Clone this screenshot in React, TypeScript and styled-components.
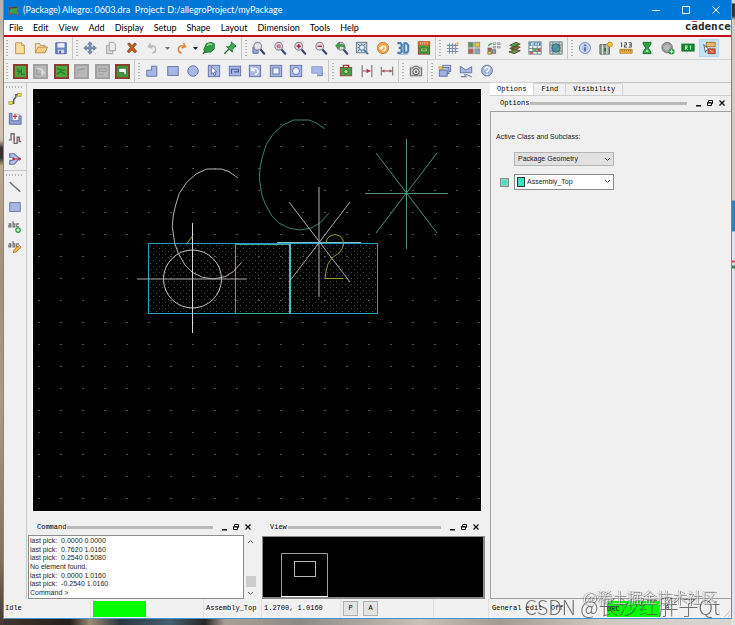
import React from "react";
import styled, { createGlobalStyle } from "styled-components";

const mono = '"Liberation Mono", "DejaVu Sans Mono", monospace';
const sans = '"Liberation Sans", Arial, sans-serif';
const ui = 'Lato, "Open Sans", sans-serif';

const GlobalStyle = createGlobalStyle`
  *, *::before, *::after { box-sizing: border-box; }
  html, body { margin: 0; padding: 0; }
  body { font-family: ${sans}; font-size: 8px; color: #222; }
  button, select { font: inherit; color: inherit; }
`;

/* ---------- shell ---------- */

const Desktop = styled.div`
  min-height: 100vh;
  display: flex;
  padding: 0 3px 6px 3px;
  background:
    linear-gradient(to bottom, #d6d2cf 0 3px, #333 4px 16px, #cfcac6 20px 200px, #2f7fc0 201px 231px, #dfe3ea 232px 260px, #d8404c 261px 262px, #dfe3ea 263px 265px, #3f7d4d 266px 268px, #dfe3ea 269px) right top / 4px 100% no-repeat,
    linear-gradient(to bottom, #b9b4b0 0 20px, #d5d0c8 60px, #c9c0b4 140px, #333 148px 158px, #b9aa98 166px, #9b8f80 280px, #a59c8c 400px, #7d7465 560px, #42372e) left top / 4px 100% no-repeat,
    linear-gradient(to right, #43342b 0, #24201d 70px, #9a8a72 90px, #2b3640 120px, #45606f 170px, #262523 205px, #a9a096 225px, #8d8a86 300px, #c9c1b8 420px, #a49b93 500px, #cfc8c0 600px, #d9d6d2) left bottom / 100% 6px no-repeat,
    #b8b0a6;
`;

const Window = styled.div`
  flex: 1;
  min-width: 0;
  display: grid;
  grid-template-rows: auto auto auto 1fr auto;
  background: #f0f0f0;
  border: 1px solid #4596cf;
  border-top: 0;
`;

const TitleBar = styled.header`
  height: 20px;
  display: flex;
  align-items: center;
  padding-left: 3px;
  background: #0078d7;
  color: #fff;
  font: 9px/20px ${ui};
  white-space: pre;
`;
const Title = styled.h1`
  flex: 1;
  margin: 0 0 0 3px;
  font: inherit;
`;
const CaptionButton = styled.button`
  width: 30px;
  height: 20px;
  padding: 0;
  border: 0;
  background: none;
  color: #fff;
  display: grid;
  place-items: center;
`;

const MenuBar = styled.nav`
  height: 17px;
  display: flex;
  align-items: flex-start;
  padding-left: 5px;
  background: #fff;
  border-bottom: 2px solid #c40d1e;
`;
const MenuItem = styled.button`
  height: 15px;
  padding: 0;
  margin-right: 10px;
  border: 0;
  background: none;
  color: #000;
  font: 9px/15px ${ui};
`;
const Brand = styled.div`
  margin-left: auto;
  padding-top: 1px;
  color: #2b2b2b;
  font: bold 11px/12px "DejaVu Sans Mono", monospace;
`;
const BrandAccent = styled.span`
  position: relative;
  &::before {
    content: "";
    position: absolute;
    left: 1px;
    top: 1px;
    width: 5px;
    height: 1px;
    background: #c8384a;
  }
`;

/* ---------- toolbars ---------- */

const ToolRows = styled.div`
  border-bottom: 1px solid #c4c4c4;
`;
const ToolRow = styled.div`
  height: 23px;
  display: flex;
  gap: 1px;
  border-bottom: 1px solid #d2d2d2;
  &:last-child { height: 22px; border-bottom: 0; }
`;
const Group = styled.div<{ $last?: boolean }>`
  display: flex;
  align-items: center;
  padding: 0 1px 0 2px;
  border-right: 1px solid ${(p) => (p.$last ? "transparent" : "#c8c8c8")};
`;
const Grip = styled.span<{ $across?: boolean }>`
  flex: none;
  width: ${(p) => (p.$across ? "18px" : "2px")};
  height: ${(p) => (p.$across ? "2px" : "16px")};
  background: repeating-linear-gradient(${(p) => (p.$across ? "to right" : "to bottom")}, #b4b4b4 0 1px, #f0f0f0 1px 3px);
`;
const Tools = styled.div<{ $width: number }>`
  width: ${(p) => p.$width}px;
  margin-left: 2px;
  display: flex;
  align-items: center;
  justify-content: space-between;
`;
const ToolButton = styled.button<{ $active?: boolean; $narrow?: boolean }>`
  width: ${(p) => (p.$narrow ? "6px" : "20px")};
  height: 18px;
  padding: 0;
  border: 1px solid ${(p) => (p.$active ? "#b4d8f4" : "transparent")};
  background: ${(p) => (p.$active ? "#c6e2f7" : "none")};
  display: grid;
  place-items: center;
  svg { display: block; }
`;

/* ---------- work area ---------- */

const Work = styled.main`
  display: grid;
  grid-template-columns: 23px minmax(0, 1fr) 241px;
  min-height: 0;
`;
const SideBar = styled.div`
  display: flex;
  flex-direction: column;
  align-items: center;
  border-right: 1px solid #cacaca;
`;
const SideGroup = styled.div`
  width: 100%;
  display: flex;
  flex-direction: column;
  align-items: center;
  gap: 2px;
  padding: 3px 1px 2px 0;
  & + & { border-top: 1px solid #c4c4c4; }
`;
const Center = styled.div`
  display: grid;
  grid-template-rows: minmax(0, 1fr) auto;
  min-width: 0;
`;
const CanvasFrame = styled.div`
  margin: 5px 8px 8px 5px;
  min-height: 200px;
  background: #000;
  border: 1px solid #fafafa;
  svg { display: block; width: 100%; height: 100%; }
`;
const Docks = styled.div`
  display: flex;
  gap: 5px;
  padding: 0 5px 0 1px;
`;
const Dock = styled.section<{ $share: number }>`
  flex: ${(p) => p.$share} 1 0;
  min-width: 0;
`;
const DockHeader = styled.div<{ $indent: number }>`
  height: 15px;
  display: flex;
  align-items: center;
  padding: 0 3px 1px ${(p) => p.$indent}px;
`;
const DockTitle = styled.h2`
  margin: 0;
  font: 7px/12px ${mono};
  color: #000;
`;
const DockLine = styled.span`
  flex: 1;
  height: 3px;
  margin: 0 5px 0 1px;
  background: #b9b9b9;
`;
const DockButton = styled.button`
  width: 12px;
  height: 12px;
  padding: 0;
  border: 0;
  background: none;
  display: grid;
  place-items: center;
`;

const CommandBody = styled.div`
  display: grid;
  grid-template-columns: minmax(0, 1fr) 13px;
  height: 64px;
`;
const Log = styled.div`
  display: flex;
  flex-direction: column;
  justify-content: space-between;
  padding: 1px;
  background: #fff;
  border: 1px solid #8c8c8c;
  white-space: pre;
  line-height: 8px;
  font-size: 7px;
  color: #222;
`;
const Scroll = styled.div`
  display: grid;
  grid-template-rows: 12px 1fr 11px 12px;
  justify-items: center;
`;
const ScrollButton = styled.button<{ $row: number }>`
  grid-row: ${(p) => p.$row};
  width: 12px;
  padding: 0;
  border: 0;
  background: none;
  display: grid;
  place-items: center;
`;
const Thumb = styled.span`
  grid-row: 3;
  width: 10px;
  background: #cdcdcd;
`;
const ViewBody = styled.div`
  height: 63px;
  margin-top: 1px;
  background: #000;
  border: 1px solid #8a8a8a;
  border-width: 1px 2px 2px 1px;
  svg { display: block; width: 100%; height: 100%; }
`;

/* ---------- options ---------- */

const Side = styled.aside`
  display: flex;
  flex-direction: column;
`;
const Tabs = styled.div`
  display: flex;
  align-items: flex-end;
  height: 13px;
  border-bottom: 1px solid #d0d0d0;
`;
const Tab = styled.button<{ $on?: boolean }>`
  height: ${(p) => (p.$on ? 13 : 12)}px;
  padding: 0 7px;
  border: 1px solid #d4d4d4;
  border-width: 1px 1px 0 0;
  background: ${(p) => (p.$on ? "#fff" : "#f0f0f0")};
  color: #000;
  font: 7px/11px ${mono};
`;
const OptionsBody = styled.div`
  flex: 1;
  padding: 20px 5px;
  border: 1px solid #a0a0a0;
  border-right-width: 0;
  display: flex;
  flex-direction: column;
`;
const FieldLabel = styled.label`
  line-height: 10px;
  font-size: 7px;
  color: #222;
`;
const FieldRow = styled.div`
  display: flex;
  align-items: center;
  gap: 5px;
  margin-top: 8px;
  &:nth-of-type(1) { margin-top: 10px; padding-left: 18px; }
  &:nth-of-type(2) { padding-left: 4px; }
`;
const Combo = styled.div`
  position: relative;
  width: 100px;
  svg { position: absolute; right: 3px; top: 5px; pointer-events: none; }
`;
const Select = styled.select<{ $filled?: boolean }>`
  display: block;
  width: 100%;
  height: ${(p) => (p.$filled ? 14 : 16)}px;
  padding: 0 12px 0 ${(p) => (p.$filled ? 3 : 12)}px;
  appearance: none;
  border: 1px solid ${(p) => (p.$filled ? "#b4b4b4" : "#8a8a8a")};
  border-radius: 0;
  background: ${(p) => (p.$filled ? "#e1e1e1" : "#fff")};
  font-size: 7px;
  line-height: 12px;
`;
const Swatch = styled.span`
  position: absolute;
  left: 3px;
  top: 3px;
  width: 8px;
  height: 10px;
  background: #35e8c0;
  border: 1px solid #333;
`;
const VisibleBox = styled.input`
  appearance: none;
  width: 9px;
  height: 9px;
  margin: 0;
  background: #3fe6c4;
  border: 1px solid #8c8c8c;
  outline: 1px solid #a9c9c0;
  outline-offset: -2px;
`;

/* ---------- status ---------- */

const StatusBar = styled.footer`
  height: 19px;
  display: grid;
  grid-template-columns: 86px 113px 58px 79px 93px 55px minmax(0, 1fr);
  font: 7px/19px ${mono};
  color: #000;
  background: #f1f1f1;
`;
const Cell = styled.div<{ $pad?: number }>`
  display: flex;
  align-items: center;
  gap: 5px;
  padding-left: ${(p) => p.$pad ?? 2}px;
  white-space: pre;
  & + & { border-left: 1px solid #e0e0e0; }
`;
const Lamp = styled.span`
  width: 53px;
  height: 16px;
  background: #00ff00;
  line-height: 16px;
`;
const MiniButton = styled.button`
  width: 15px;
  height: 15px;
  padding: 0;
  border: 1px solid #b0b0b0;
  background: #e3e3e3;
  line-height: 13px;
`;
const EditState = styled.span`
  width: 110px;
`;
const SizeGrip = styled.span`
  align-self: end;
  margin: 0 1px 1px auto;
  width: 7px;
  height: 7px;
  background: repeating-linear-gradient(135deg, #f1f1f1 0 2px, #c2c2c2 2px 3px);
  clip-path: polygon(100% 0, 100% 100%, 0 100%);
`;

const Marks = styled.div`
  position: fixed;
  right: 15px;
  bottom: 7px;
  pointer-events: none;
  white-space: nowrap;
  font-family: "Noto Sans CJK SC", sans-serif;
`;
const FrontMark = styled.div`
  font-size: 20px;
  line-height: 22px;
  font-weight: 300;
  color: rgba(80, 80, 80, 0.8);
`;
const BackMark = styled.div`
  position: absolute;
  right: 3px;
  bottom: 11px;
  font-size: 15px;
  line-height: 20px;
  font-weight: 300;
  color: rgba(235, 235, 235, 0.8);
  text-shadow: 1px 1px 0 rgba(100, 100, 100, 0.8), -1px 0 0 rgba(130, 130, 130, 0.5);
`;

/* ---------- icons ---------- */

const Pcb = ({ border = "#8e3b2c", fill = "#4fa83f", children }: any) => (
  <>
    <rect x="1" y="1" width="14" height="14" fill={fill} stroke={border} strokeWidth="2" />
    {children}
  </>
);
const Lens = ({ children }: any) => (
  <>
    <path d="M9.500 9.500l4.500 5" stroke="#39496f" strokeWidth="2.400" strokeLinecap="round" />
    <circle cx="6.500" cy="6" r="4.400" fill="#e5e0e8" stroke="#8b8796" strokeWidth="1.300" />
    {children}
  </>
);
const blue = { fill: "#a9b8e2", stroke: "#5d6ca5" };

const glyphs: Record<string, React.ReactNode> = {
  new: <><path d="M3 2h7l3 3v9.500H3z" fill="#f7dca2" stroke="#bd8c46" /><path d="M10 2v3h3" fill="#fff3d8" stroke="#bd8c46" /></>,
  open: <><path d="M1.500 13V3h5l1 2h5v2" fill="#f6e3b8" stroke="#b98f55" /><path d="M1.500 13.500L4.500 7h11l-3 6.500z" fill="#fbcf86" stroke="#b98145" /></>,
  save: <><path d="M2 2h12v12.500H2z" fill="#7187c3" stroke="#4b5f9b" /><path d="M4 2.500h8v5H4z" fill="#e9f0fb" /><path d="M4.500 10h7v4h-7z" fill="#cfd6e8" /><path d="M6 11h2v3H6z" fill="#44548a" /></>,
  move: <path d="M8 .8l2.600 3H9v3.200h3.200V5.400l3 2.600-3 2.600V9H9v3.200h1.600L8 15.200l-2.600-3H7V9H3.800v1.600L.8 8l3-2.600V7H7V3.800H5.400z" fill="#7d93b8" stroke="#4f6488" strokeWidth=".7" />,
  copy: <><path d="M3 5h7v9.500H3z" fill="#dcdcdc" stroke="#9c9c9c" /><path d="M6 1.500h5l2 2V11H6z" fill="#ececec" stroke="#9c9c9c" /></>,
  del: <path d="M3 3.200l2.200-1L8 5.500l3-3.300 2 1.300-3.200 4 3.500 4.200-2.200 2L8 10l-3.200 3.500-2.200-1.500 3.500-4.500z" fill="#c4601f" stroke="#6e2e10" strokeWidth=".8" />,
  undo: <path d="M5 2.500L3 6.500l4.500 1.500M3.500 6.300c4-2 7.500-.5 7.500 3 0 2.500-1.500 4-3.500 4.500" fill="none" stroke="#b9b9b9" strokeWidth="1.800" />,
  redo: <path d="M11 2.500l2 4-4.500 1.500M12.500 6.300c-4-2-7.500-.5-7.500 3 0 2.500 1.500 4 3.500 4.500" fill="none" stroke="#e28a3c" strokeWidth="1.900" />,
  shapeGreen: <><path d="M2 10l3-7 5-1.500L14 3v6l-4 3.500-6 .5z" fill="#2f9e44" stroke="#176b2c" /><path d="M5.500 5.500L8 3.500l3.500.5" stroke="#8fdc98" strokeWidth="1.500" fill="none" /><path d="M1 14.500L4 12" stroke="#176b2c" strokeWidth="1.500" /></>,
  pin: <><path d="M9.500 1l5.500 5-2 .8-2.500 2.800.2 3L4 6.500l3 .2L9.500 3.500z" fill="#3fae52" stroke="#176b2c" /><path d="M6.500 9.500L1.500 14.500" stroke="#256b35" strokeWidth="1.500" /></>,
  zoomArea: <><path d="M1 7h6v7H1z" fill="#90a5d8" stroke="#5d6ca5" /><Lens /></>,
  zoomFit: <Lens><path d="M4.800 4.500h3.400v3.200H4.800z" fill="#d6a0ac" stroke="#b54a5c" strokeWidth=".8" /></Lens>,
  zoomIn: <Lens><path d="M6.500 3.500v5M4 6h5" stroke="#b8243a" strokeWidth="1.600" /></Lens>,
  zoomOut: <Lens><path d="M4 6h5" stroke="#b8243a" strokeWidth="1.600" /></Lens>,
  zoomPrev: <><Lens /><path d="M12 9c0-4-3-6-7-5V1.500L.5 5.500 5 9V6.500c3-.8 5-.3 7 2.500z" fill="#46a24f" stroke="#28713a" strokeWidth=".6" /></>,
  zoomWorld: <><rect x="1.500" y="1.500" width="12" height="12" fill="#c3d3dd" stroke="#5f7180" /><path d="M3 3l3 3M12 3L9 6M3 12l3-3M7.500 3v9M3 7.500h9" stroke="#516880" /><circle cx="8" cy="7.500" r="3" fill="#e1edf4" stroke="#63839f" /><path d="M10 10l5 5" stroke="#5178a5" strokeWidth="2" /></>,
  refresh: <><circle cx="8" cy="8" r="6.500" fill="#f1a84c" stroke="#c27a2b" /><path d="M4 7l2 2.500L8 7M6 9c0-4 5-4 5-.8 0 2-1.500 3-3.500 3" fill="none" stroke="#fff" strokeWidth="1.500" /></>,
  three: <><path d="M1.500 2.500H5L6.500 4v2.500L5 8l1.500 1.500V12L5 13.500H1.500M3 8h2" fill="none" stroke="#4d82b5" strokeWidth="2.600" /><path d="M9.500 2.500H12l2 2.500v6l-2 2.500H9.500z" fill="#dbe8f3" stroke="#4d82b5" strokeWidth="2.400" /><path d="M3 15.300h10l2.500-3" stroke="#8fb3d4" fill="none" /></>,
  flip: <><rect x="1.500" y="1" width="13" height="14" fill="#4f9a3f" stroke="#77452a" /><path d="M1 .5h14V5H1z" fill="#d8653a" /><path d="M4 1.500v2.500M6.500 1.500v2.500M9 1.500v2.500M11.500 1.500v2.500" stroke="#f6d9a0" /><path d="M4 8h8v4.500H4z" fill="#9ed36d" stroke="#2e6b28" /><path d="M6 10h4" stroke="#2e6b28" /></>,
  grid: <><path d="M1 5h13M1 8.500h13M1 12h13M4 2.500v12M7.500 2.500v12M11 2.500v12" stroke="#7e8eb0" strokeWidth="1.200" /><path d="M13 0l.7 2 2 .7-2 .8-.7 2-.7-2-2-.8 2-.7z" fill="#f2bd6d" /></>,
  colors: <><rect x="1.500" y="1.500" width="5.500" height="5.500" fill="#4f9e46" stroke="#8a8a8a" /><rect x="9" y="1.500" width="5.500" height="5.500" fill="#e8c23a" stroke="#8a8a8a" /><rect x="1.500" y="9" width="5.500" height="5.500" fill="#c9574b" stroke="#8a8a8a" /><rect x="9" y="9" width="5.500" height="5.500" fill="#8fa2c6" stroke="#8a8a8a" /></>,
  layers: <><path d="M7 2h3v2H7zM12 2h3v2h-3zM7 6h3v2H7zM12 6h3v2h-3z" fill="#d9d9d9" stroke="#7b7b7b" strokeWidth=".7" /><rect x="1" y="8" width="4" height="3" fill="#c9574b" stroke="#555" strokeWidth=".7" /><rect x="6" y="10" width="4" height="4" fill="#8fa2c6" stroke="#555" strokeWidth=".7" /><rect x="1" y="12" width="4" height="3" fill="#e8c23a" stroke="#555" strokeWidth=".7" /><path d="M2 6c0-3 2-3 4-3" stroke="#46a24f" strokeWidth="1.500" fill="none" /></>,
  stack: <><path d="M1 12.500l7-3 6 1.500-7 3.500z" fill="#6a9b48" stroke="#5b4430" /><path d="M2 8.500l6-3 6 1.500-6 3.500z" fill="#b05a43" stroke="#5b4430" /><path d="M2 5l7-3.500 5 2-6 3.500z" fill="#55a546" stroke="#5b4430" /><path d="M4 10l7-6" stroke="#2f6f2b" strokeWidth="1.500" /></>,
  cm: <><rect x="1" y="1" width="14" height="14" fill="#eef0ee" stroke="#6a7d80" /><path d="M1.500 1.500h13v4h-13z" fill="#4e87b0" /><path d="M7 2.500H4v2h3M9 5V2.500l1.500 1.500L12 2.500V5" stroke="#fff" fill="none" /><path d="M1 8.500h14M1 12h14M5.500 6v9M10.500 6v9" stroke="#6a7d80" /><path d="M6 9h4v2.500H6z" fill="#4fa84f" /><path d="M11 9h3.500v2.500H11zM2 12.500h3v2H2z" fill="#c9473f" /></>,
  globe: <><rect x="1" y="1" width="14" height="14" fill="#d3d9d7" stroke="#667773" /><path d="M1 4.500h14M1 11.500h14M4.500 1v14M11.500 1v14" stroke="#667773" /><circle cx="8" cy="8" r="4.800" fill="#4b86b6" stroke="#2c5679" /><path d="M5 5.500l3-1.500 1 2-2 2.500zM8.500 9l3-1-1 3-2 .5z" fill="#59ad55" /></>,
  info: <><circle cx="8" cy="8" r="6.300" fill="#b6c4e6" stroke="#7485b5" /><circle cx="8" cy="8" r="4.800" fill="none" stroke="#dfe7f7" /><path d="M8 7v5M8 4v1.700" stroke="#4a6196" strokeWidth="1.800" /></>,
  pads: <><path d="M1 4h11v11H1z" fill="#8d9a90" stroke="#5c655f" /><path d="M4 4v11M9 4v11" stroke="#dde2de" strokeWidth="1.300" /><path d="M6 8h2v4H6z" fill="#2f6b3b" /><circle cx="12.500" cy="4" r="2.800" fill="#f6c83b" stroke="#bb8d1d" /></>,
  ruler: <><path d="M1 9.500h14V14H1z" fill="#f3b64a" stroke="#b97e24" /><path d="M3.500 10v2M6 10v2M8.500 10v2M11 10v2M13 10v2" stroke="#8c5a16" /><path d="M2 2.500L3 2v5M6 2h2.500v2.500H6.200V7H9M11 2h3v5h-3M11.500 4.500H14" stroke="#3c3c3c" fill="none" /></>,
  timer: <><path d="M3.500 1.500h9v2L9.500 8l3 4.500v2h-9v-2L6.500 8l-3-4.500z" fill="#2f9e44" stroke="#1c6d2f" /><path d="M6 12.500L8 9.500l2 3z" fill="#b6ebbd" /></>,
  via: <><circle cx="7" cy="7.500" r="6" fill="#9a9a9a" stroke="#777" /><circle cx="7" cy="7.500" r="3.500" fill="#b9b9b9" /><circle cx="12" cy="12" r="3.500" fill="#2fa348" /><path d="M12 10v4M10 12h4" stroke="#fff" strokeWidth="1.300" /></>,
  r1: <><rect x="1" y="3.500" width="14" height="8" fill="#0f8a2b" stroke="#0c6b22" /><path d="M5 10V5.500h2v2H5.500L7.500 10M10 6l1-.5V10" stroke="#e6ffe9" fill="none" /></>,
  drag: <><rect x="5" y="1.500" width="10" height="5" fill="#f0b66a" stroke="#a5702d" /><path d="M2 4l6 6-3 .3L4 13z" fill="#fff" stroke="#333" strokeWidth=".8" /><rect x="7" y="9" width="8" height="5.500" fill="#df5b3a" stroke="#a53c22" /><path d="M9 10.500l4 2.500" stroke="#fbd4c7" /></>,

  pcb1: <Pcb><path d="M4 5l4 3H4M9 5v6h4M5 11l3-3" stroke="#2a7a30" fill="none" strokeWidth="1.200" /></Pcb>,
  pcb2: <Pcb border="#a0a0a0" fill="#b9b9b9"><path d="M5 5h3M8 5l4 4H9.500l1 3" fill="none" stroke="#dedede" strokeWidth="1.500" /><path d="M4 6v5h4" stroke="#939393" /></Pcb>,
  pcb3: <Pcb><path d="M3 5c4 0 4 3 9 1M3 11l4-3 5 3" stroke="#2a7a30" fill="none" strokeWidth="1.500" /></Pcb>,
  pcb4: <Pcb border="#a0a0a0" fill="#b9b9b9"><path d="M4 11V6h6M7 5h5" stroke="#9a9a9a" fill="none" /></Pcb>,
  pcb5: <Pcb border="#a0a0a0" fill="#b9b9b9"><path d="M4 5h8v3H4zM4 11h5" stroke="#9a9a9a" fill="none" /></Pcb>,
  pcb6: <Pcb fill="#3f9a35"><path d="M4 4.500h8v7H9.500V9H4z" fill="#f3f6f3" stroke="#1e6a26" strokeWidth=".8" /></Pcb>,
  poly: <path d="M2 14V7h5.500V2.500h6V14z" {...blue} />,
  rect: <rect x="2" y="3" width="12" height="10" {...blue} />,
  circle: <circle cx="8" cy="8" r="6" {...blue} />,
  select: <><rect x="1.500" y="1.500" width="13" height="13" {...blue} /><path d="M5 3l6 6H8.500l1.500 3.500-1.500.6L7 9.700 5 11.500z" fill="#fff" stroke="#435187" strokeWidth=".8" /></>,
  shapeEdit: <><rect x="1.500" y="2.500" width="13" height="11" {...blue} /><path d="M4 11V6h8v3H7" stroke="#4b5a93" fill="none" strokeWidth="1.300" /></>,
  rotate: <><rect x="1.500" y="1.500" width="13" height="13" {...blue} /><path d="M5 6.500a3.500 3.500 0 1 1 3 5.500M4 3.500v4h4" stroke="#fff" fill="none" strokeWidth="1.600" /></>,
  voidRect: <><rect x="1.500" y="1.500" width="13" height="13" {...blue} /><rect x="4.500" y="4.500" width="7" height="7" fill="#eef0f7" stroke="#5d6ca5" /></>,
  voidCircle: <><rect x="1.500" y="1.500" width="13" height="13" {...blue} /><circle cx="8" cy="8" r="4" fill="#eef0f7" stroke="#5d6ca5" /></>,
  poly2: <><path d="M2 3h12v10H9v-2.500H2z" {...blue} stroke="#8b98c4" /><path d="M8 13.500h6V8" stroke="#5d6ca5" fill="none" strokeDasharray="1 1" /></>,
  chip: <><path d="M5 4V1.500h6V4" stroke="#a3392b" fill="none" strokeWidth="1.500" /><rect x="1.500" y="4" width="13" height="9.500" fill="#3fa047" stroke="#963f2c" /><circle cx="8" cy="8.500" r="2.500" fill="#b7e58d" stroke="#276c2d" /></>,
  dim1: <><path d="M2.500 1v14M13.500 1v14" stroke="#787878" strokeWidth="1.300" /><path d="M3 8h9" stroke="#a5505c" strokeWidth="1.200" /><path d="M7.500 5.500L12 8l-4.500 2.500z" fill="#c22c3f" /></>,
  dim2: <><path d="M1.500 3v10M14.500 3v10" stroke="#787878" strokeWidth="1.300" /><path d="M2 8h12" stroke="#a5505c" strokeWidth="1.300" /><path d="M5 6L2.500 8 5 10zM11 6l2.500 2L11 10z" fill="#a5505c" /></>,
  camera: <><path d="M1.500 4.500h3l1.500-2h4l1.500 2h3v9h-13z" fill="#c8c8c8" stroke="#555" /><circle cx="8" cy="8.800" r="3.500" fill="#f2f2f2" stroke="#444" /><circle cx="8" cy="8.800" r="1.500" fill="#666" /></>,
  windows: <><rect x="5.500" y="1.500" width="9" height="7" fill="#c5d2ef" stroke="#5d6ca5" /><rect x="3.500" y="4" width="9" height="7" fill="#b1c0e6" stroke="#5d6ca5" /><rect x="1.500" y="7" width="9" height="7" fill="#9fb1de" stroke="#5d6ca5" /><path d="M1 3h4v3H1z" fill="#f4cd56" stroke="#b48c28" strokeWidth=".7" /></>,
  mirror: <><path d="M1.500 2.500L8 7l6.500-4v7H1.500z" {...blue} /><path d="M2 14.500h6l-2-3M8 12l6.500 2.500" stroke="#77809a" fill="none" strokeWidth="1.300" /></>,
  help: <><circle cx="8" cy="7.500" r="6.200" fill="#a9b8dd" stroke="#5e6fa5" /><path d="M5.800 6c0-3 4.600-3 4.600-.3C10.400 7.500 8 7.500 8 9.500M8 10.800v1.600" stroke="#fff" fill="none" strokeWidth="1.600" /></>,

  route: <><path d="M2.500 13h4V8.500L9 6V3h4" stroke="#5a5a5a" fill="none" strokeWidth="1.600" /><rect x="1" y="11" width="4" height="3.500" fill="#e7dd43" stroke="#8b8433" strokeWidth=".6" /><rect x="11" y="1.500" width="4" height="3.500" fill="#e7dd43" stroke="#8b8433" strokeWidth=".6" /></>,
  slide: <><path d="M1.500 1.500h3V10h8V4.500h2.500V14h-13.500z" fill="#93a4d6" stroke="#5666a0" /><path d="M8 2v6M5.500 5h5" stroke="#c5354a" strokeWidth="1.300" /><path d="M9 2.500h5M11.500 6h3" stroke="#aaa" /></>,
  delay: <><path d="M1 9h2.500V2H7v11h3.500V6H13v5h2" stroke="#6d6d6d" fill="none" strokeWidth="1.600" /><path d="M7 5v5M12.800 11V7" stroke="#b0566a" strokeWidth="1.200" /></>,
  miter: <><path d="M2 2h5l6 5.500L7 14H2V9.500h3L7 8 5 6H2z" fill="#b9c5e8" stroke="#6475b2" strokeWidth="1.400" /><path d="M6 8h6" stroke="#b5324a" strokeWidth="1.200" /><circle cx="6.500" cy="8" r="1.400" fill="#c22c3f" /><circle cx="13" cy="8" r="1.700" fill="#c22c3f" /></>,
  line: <path d="M2 2.500L14 13.500" stroke="#6c727b" strokeWidth="1.700" />,
  textAdd: <><path d="M.8 4.500h2.500v3.300H1V6h2M5.800 1.500v6.300h2V4.500h-2M12.600 4.500H10v3.300h2.600" stroke="#707070" fill="none" strokeWidth="1.300" /><circle cx="11.500" cy="11.500" r="3.300" fill="#2fa348" /><path d="M11.500 9.600v3.800M9.600 11.500h3.800" stroke="#fff" strokeWidth="1.200" /></>,
  textEdit: <><path d="M.8 4.500h2.500v3.300H1V6h2M5.800 1.500v6.300h2V4.500h-2M12.600 4.500H10v3.300h2.600" stroke="#707070" fill="none" strokeWidth="1.300" /><path d="M6 14.500l1-3.500 6-5 2 2.200-5.800 5.500z" fill="#f2b648" stroke="#9a6b26" strokeWidth=".8" /></>,
};

const Icon = ({ name, size = 16 }: { name: string; size?: number }) => (
  <svg width={size} height={size} viewBox="0 0 16 16" fill="none" aria-hidden="true">{glyphs[name]}</svg>
);
const Caret = ({ color }: { color: string }) => (
  <svg width="5" height="3" viewBox="0 0 5 3" aria-hidden="true"><path d="M0 0h5L2.500 3z" fill={color} /></svg>
);
const Chevron = ({ up }: { up?: boolean }) => (
  <svg width="7" height="5" viewBox="0 0 7 5" fill="none" aria-hidden="true">
    <path d={up ? "M1 4l2.500-2.500L6 4" : "M1 1l2.500 2.500L6 1"} stroke="#555" />
  </svg>
);

const row1 = [
  { width: 61, tools: ["new", "open", "save"] },
  { width: 160, tools: ["move", "copy", "del", "undo", "caret-grey", "redo", "caret-black", "shapeGreen", "pin"] },
  { width: 185, tools: ["zoomArea", "zoomFit", "zoomIn", "zoomOut", "zoomPrev", "zoomWorld", "refresh", "three", "flip"] },
  { width: 123, tools: ["grid", "colors", "layers", "stack", "cm", "globe"] },
  { width: 144, tools: ["info", "pads", "ruler", "timer", "via", "r1", "drag"] },
];
const row2 = [
  { width: 123, tools: ["pcb1", "pcb2", "pcb3", "pcb4", "pcb5", "pcb6"] },
  { width: 185, tools: ["poly", "rect", "circle", "select", "shapeEdit", "rotate", "voidRect", "voidCircle", "poly2"] },
  { width: 61, tools: ["chip", "dim1", "dim2"] },
  { width: 20, tools: ["camera"] },
  { width: 62, tools: ["windows", "mirror", "help"] },
];

const renderRow = (groups: typeof row1) => (
  <ToolRow>
    {groups.map((g, i) => (
      <Group key={i} $last={i === groups.length - 1}>
        <Grip />
        <Tools $width={g.width}>
          {g.tools.map((t) =>
            t.startsWith("caret") ? (
              <ToolButton key={t} $narrow aria-label={`${t} menu`}><Caret color={t === "caret-grey" ? "#777" : "#222"} /></ToolButton>
            ) : (
              <ToolButton key={t} $active={t === "drag"} aria-label={t}><Icon name={t} size={t.startsWith("pcb") ? 15 : 14} /></ToolButton>
            ),
          )}
        </Tools>
      </Group>
    ))}
  </ToolRow>
);

const Header = ({ title, indent }: { title: string; indent: number }) => (
  <DockHeader $indent={indent}>
    <DockTitle>{title}</DockTitle>
    <DockLine />
    <DockButton aria-label={`Minimize ${title}`}>
      <svg width="8" height="8" viewBox="0 0 8 8"><path d="M2 6h5v1.500H2z" fill="#111" /></svg>
    </DockButton>
    <DockButton aria-label={`Float ${title}`}>
      <svg width="8" height="8" viewBox="0 0 8 8" fill="none" stroke="#111"><path d="M2.500 3V1.500h4v3H5M1.500 3.500h4v3h-4zM2 4h3" /></svg>
    </DockButton>
    <DockButton aria-label={`Close ${title}`}>
      <svg width="8" height="8" viewBox="0 0 8 8" stroke="#111" strokeWidth="1.300"><path d="M1.500 1.500l5 5M6.500 1.500l-5 5" /></svg>
    </DockButton>
  </DockHeader>
);

const letterC = "M204.700 88.700L196 82.700 188.700 80H173.700L163 85 153.700 93.300 146.300 104.300 142.700 116 140.300 126 139.300 137.700 141.700 154.300 145.300 164.300 152 176 159.300 183.300 169.700 188.300 180.300 190 192 187.700 200.300 182.700 208.700 173.300";

const Drawing = () => (
  <svg role="img" aria-label="Package drawing" fill="none">
    <defs>
      <pattern id="dots" x="5" y="13" width="22" height="22" patternUnits="userSpaceOnUse">
        <rect width="2" height="1" fill="#4d5551" />
      </pattern>
      <pattern id="hatch" x="117" y="156" width="6" height="6" patternUnits="userSpaceOnUse">
        <rect width="1" height="1" fill="#3f4a4d" /><rect x="3" y="3" width="1" height="1" fill="#3f4a4d" />
      </pattern>
    </defs>
    <rect width="100%" height="100%" fill="url(#dots)" />
    <rect x="116" y="155" width="228" height="69" fill="url(#hatch)" />
    <rect x="115.500" y="154.500" width="229" height="70" stroke="#2a9fc4" />
    <rect x="202.500" y="155.500" width="55" height="69" stroke="#39a993" />
    <path d="M257 155v69" stroke="#4db9bd" strokeWidth="2" />
    <path d={letterC} stroke="#b5b5b5" />
    <path d={letterC} stroke="#43806a" transform="translate(87 -49)" />
    <circle cx="159.500" cy="190" r="29" stroke="#c4c4c4" />
    <path d="M159.500 134v110" stroke="#d8d8d8" />
    <path d="M104 190h110" stroke="#aaa" />
    <path d="M154 154.500l5.500-7.500" stroke="#a5a52a" />
    <path d="M286 98v110M256 113l61 80M317 113l-61 80" stroke="#b0b0b0" />
    <path d="M244 153.500h84" stroke="#76c3ce" />
    <path d="M373.500 50v110M332 104.500h83M343 64l61 80M404 64l-61 80" stroke="#52917b" />
    <path d="M293 154l1-4 3-3 5-1.500 5 1.500 3 4 .5 5-1.500 4-3 4-7 5-4 6-2 7-1 7.500h18.500" stroke="#9c9c20" />
  </svg>
);

const log = [
  "last pick:  0.0000 0.0000",
  "last pick:  0.7620 1.0160",
  "last pick:  0.2540 0.5080",
  "No element found.",
  "last pick:  0.0000 1.0160",
  "last pick:  -0.2540 1.0160",
  "Command >",
];

export default function App() {
  return (
    <Desktop>
      <GlobalStyle />
      <Window>
        <TitleBar>
          <svg width="13" height="13" viewBox="0 0 13 13" aria-hidden="true">
            <path d="M2 3h8v7H2z" fill="#3b4a3a" />
            <path d="M1 1.500l6 4.500 5-4-2 5 2 5-5-3-6 2.500 3-5z" fill="#d03a38" />
            <path d="M5 4.500l7-.5-3 3 3 3-7-.5L1 8z" fill="#39a34a" />
          </svg>
          <Title>{"(Package) Allegro: 0603.dra  Project: D:/allegroProject/myPackage"}</Title>
          <CaptionButton aria-label="Minimize"><svg width="8" height="8" viewBox="0 0 8 8"><path d="M0 4.500h8" stroke="#fff" /></svg></CaptionButton>
          <CaptionButton aria-label="Maximize"><svg width="8" height="8" viewBox="0 0 8 8" fill="none"><path d="M.5.5h7v7h-7z" stroke="#fff" /></svg></CaptionButton>
          <CaptionButton aria-label="Close"><svg width="8" height="8" viewBox="0 0 8 8"><path d="M.5.5l7 7M7.500.5l-7 7" stroke="#fff" /></svg></CaptionButton>
        </TitleBar>
        <MenuBar>
          {["File", "Edit", "View", "Add", "Display", "Setup", "Shape", "Layout", "Dimension", "Tools", "Help"].map((m) => (
            <MenuItem key={m}>{m}</MenuItem>
          ))}
          <Brand>c<BrandAccent>a</BrandAccent>dence</Brand>
        </MenuBar>
        <ToolRows>
          {renderRow(row1)}
          {renderRow(row2)}
        </ToolRows>
        <Work>
          <SideBar>
            {[["route", "slide", "delay", "miter"], ["line", "rect", "textAdd", "textEdit"]].map((g, i) => (
              <SideGroup key={i}>
                <Grip $across />
                {g.map((t) => (
                  <ToolButton key={t} aria-label={t}><Icon name={t} size={14} /></ToolButton>
                ))}
              </SideGroup>
            ))}
          </SideBar>
          <Center>
            <CanvasFrame><Drawing /></CanvasFrame>
            <Docks>
              <Dock $share={229}>
                <Header title="Command" indent={9} />
                <CommandBody>
                  <Log>{log.map((l) => <span key={l}>{l}</span>)}</Log>
                  <Scroll>
                    <ScrollButton $row={1} aria-label="Scroll up"><Chevron up /></ScrollButton>
                    <Thumb />
                    <ScrollButton $row={4} aria-label="Scroll down"><Chevron /></ScrollButton>
                  </Scroll>
                </CommandBody>
              </Dock>
              <Dock $share={223}>
                <Header title="View" indent={8} />
                <ViewBody>
                  <svg fill="none" role="img" aria-label="Overview">
                    <path d="M18.500 60V16.500h46V60" stroke="#a0a0a0" />
                    <path d="M18 59.500h47" stroke="#fff" />
                    <rect x="31.500" y="24.500" width="21" height="15" stroke="#b8b8b8" />
                  </svg>
                </ViewBody>
              </Dock>
            </Docks>
          </Center>
          <Side>
            <Tabs>
              <Tab $on>Options</Tab>
              <Tab>Find</Tab>
              <Tab>Visibility</Tab>
            </Tabs>
            <Header title="Options" indent={10} />
            <OptionsBody>
              <FieldLabel htmlFor="active-class">Active Class and Subclass:</FieldLabel>
              <FieldRow>
                <Combo>
                  <Select $filled id="active-class"><option>Package Geometry</option></Select>
                  <Chevron />
                </Combo>
              </FieldRow>
              <FieldRow>
                <VisibleBox type="checkbox" defaultChecked aria-label="Subclass visible" />
                <Combo>
                  <Select aria-label="Subclass"><option>Assembly_Top</option></Select>
                  <Swatch />
                  <Chevron />
                </Combo>
              </FieldRow>
            </OptionsBody>
          </Side>
        </Work>
        <StatusBar>
          <Cell $pad={1}>Idle</Cell>
          <Cell>
            <Lamp />
          </Cell>
          <Cell>Assembly_Top</Cell>
          <Cell>1.2700, 1.0160</Cell>
          <Cell><MiniButton>P</MiniButton><MiniButton>A</MiniButton></Cell>
          <Cell />
          <Cell $pad={3}><EditState>{"General edit  Off"}</EditState><Lamp>DRC</Lamp>0<SizeGrip /></Cell>
        </StatusBar>
      </Window>
      <Marks>
        <BackMark>@稀土掘金技术社区</BackMark>
        <FrontMark>CSDN @长沙红胖子Qt</FrontMark>
      </Marks>
    </Desktop>
  );
}
